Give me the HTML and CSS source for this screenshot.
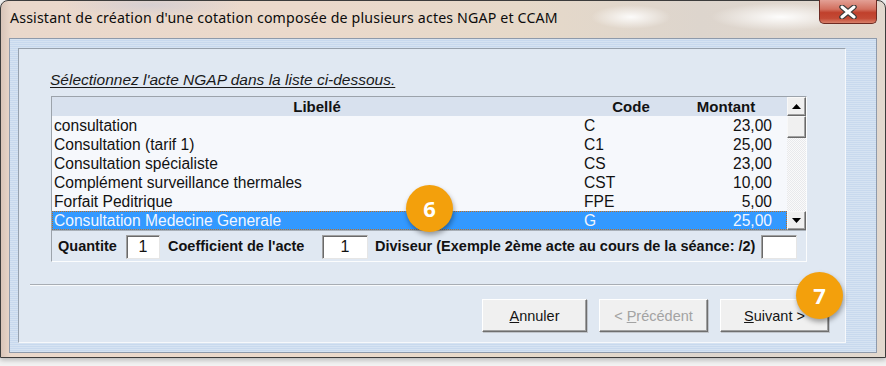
FILE: index.html
```html
<!DOCTYPE html>
<html lang="fr">
<head>
<meta charset="utf-8">
<title>Assistant NGAP CCAM</title>
<link rel="stylesheet" href="styles.css">
</head>
<body>
<div class="window">
  <div class="titlebar">
    <span class="title">Assistant de création d'une cotation composée de plusieurs actes NGAP et CCAM</span>
    <div class="close">
      <svg width="22" height="14" viewBox="0 0 22 14">
        <path d="M5 2 L17 12 M17 2 L5 12" stroke="#3a3a3a" stroke-width="5.5" stroke-linecap="round"/>
        <path d="M5 2 L17 12 M17 2 L5 12" stroke="#ffffff" stroke-width="3" stroke-linecap="round"/>
      </svg>
    </div>
  </div>
  <div class="client">
    <div class="panel">
      <p class="instr">Sélectionnez l'acte NGAP dans la liste ci-dessous.</p>
      <div class="group">
        <div class="list">
          <div class="table">
            <div class="row head"><span class="c-lib">Libellé</span><span class="c-code">Code</span><span class="c-mt">Montant</span></div>
            <div class="row"><span class="c-lib">consultation</span><span class="c-code">C</span><span class="c-mt">23,00</span></div>
            <div class="row"><span class="c-lib">Consultation (tarif 1)</span><span class="c-code">C1</span><span class="c-mt">25,00</span></div>
            <div class="row"><span class="c-lib">Consultation spécialiste</span><span class="c-code">CS</span><span class="c-mt">23,00</span></div>
            <div class="row"><span class="c-lib">Complément surveillance thermales</span><span class="c-code">CST</span><span class="c-mt">10,00</span></div>
            <div class="row"><span class="c-lib">Forfait Peditrique</span><span class="c-code">FPE</span><span class="c-mt">5,00</span></div>
            <div class="row sel"><span class="c-lib">Consultation Medecine Generale</span><span class="c-code">G</span><span class="c-mt">25,00</span></div>
          </div>
          <div class="scrollbar">
            <div class="sb-btn"><svg width="9" height="5" viewBox="0 0 9 5"><path d="M0 5 L4.5 0 L9 5 Z" fill="#000"/></svg></div>
            <div class="sb-thumb"></div>
            <div class="sb-track"></div>
            <div class="sb-btn"><svg width="9" height="5" viewBox="0 0 9 5"><path d="M0 0 L9 0 L4.5 5 Z" fill="#000"/></svg></div>
          </div>
        </div>
        <div class="qty">
          <span class="lbl l-qte">Quantite</span>
          <span class="box b-qte">1</span>
          <span class="lbl l-coef">Coefficient de l'acte</span>
          <span class="box b-coef">1</span>
          <span class="lbl l-div">Diviseur (Exemple 2ème acte au cours de la séance: /2)</span>
          <span class="box b-div"></span>
        </div>
      </div>
      <div class="sep"></div>
      <div class="buttons">
        <button class="btn b-ann"><u>A</u>nnuler</button>
        <button class="btn b-prev dis">&lt; <u>P</u>récédent</button>
        <button class="btn b-next"><u>S</u>uivant &gt;</button>
      </div>
    </div>
  </div>
  <div class="badge badge-6">6</div>
  <div class="badge badge-7">7</div>
</div>
</body>
</html>
```
FILE: styles.css
```css
html, body {
  margin: 0;
  padding: 0;
  background: #f2f2f2;
  width: 886px;
  height: 366px;
  overflow: hidden;
}
.window {
  position: relative;
  box-sizing: border-box;
  width: 886px;
  height: 358px;
  border: 1px solid #3c3c3c;
  border-radius: 8px 8px 0 0;
  padding: 0 8px 5px 8px;
  background:
    radial-gradient(ellipse 40px 12px at 630px 16px, rgba(255,255,255,0.9), rgba(255,255,255,0) 100%),
    radial-gradient(ellipse 70px 14px at 780px 16px, rgba(255,255,255,0.95), rgba(255,255,255,0) 100%),
    radial-gradient(ellipse 90px 12px at 150px 4px, rgba(200,200,215,0.6), rgba(255,255,255,0) 100%),
    linear-gradient(to right, #d8c4b8 0px, #ead8cb 10px, #ebd9cb 300px, #e6d9c9 520px, #ddd5cd 700px, #e2d8ce 886px);
  box-shadow: 0 2px 5px rgba(0,0,0,0.25);
}
.titlebar {
  height: 37px;
  display: flex;
  align-items: flex-start;
  position: relative;
}
.title {
  font-family: "Noto Sans", "Open Sans", sans-serif;
  font-size: 14.2px;
  color: #0c0c0c;
  margin: 7px 0 0 1px;
  letter-spacing: 0.15px;
  white-space: nowrap;
}
.close {
  position: absolute;
  right: 0;
  top: -1px;
  width: 58px;
  height: 24px;
  box-sizing: border-box;
  border: 1px solid #6e2a22;
  border-top: none;
  border-radius: 0 0 5px 5px;
  background: linear-gradient(to bottom, #e3a095 0%, #d2705f 40%, #c0402c 55%, #c44a35 80%, #d8806a 100%);
  display: flex;
  align-items: center;
  justify-content: center;
}
.client {
  box-sizing: border-box;
  height: 315px;
  border: 1px solid #8e9aab;
  padding: 9px 30px 9px 8px;
  background: repeating-linear-gradient(to bottom, #d6e3f2 0px, #d6e3f2 1px, #c8d9ee 1px, #c8d9ee 2px);
}
.panel {
  box-sizing: border-box;
  height: 295px;
  border: 1px solid #97a1ad;
  border-right-color: #f6f8fb;
  border-bottom-color: #f6f8fb;
  background: #e0e8f2;
  position: relative;
}
.instr {
  margin: 0;
  padding: 22px 0 0 31px;
  height: 25px;
  font-family: "Liberation Sans", Arial, sans-serif;
  font-style: italic;
  font-size: 15.5px;
  line-height: 17px;
  color: #1a1a1a;
  text-decoration: underline;
  text-underline-offset: 2px;
  white-space: nowrap;
}
.group {
  margin: 0 0 0 32px;
  width: 756px;
  box-sizing: border-box;
  border: 1px solid #9ca3ab;
  border-right-color: #fbfcfd;
  border-bottom-color: #fbfcfd;
}
.list {
  display: flex;
  height: 133px;
  border-bottom: 1px solid #a9b0b8;
}
.table {
  flex: 1;
  background: #f6f8fc;
  font-family: "Liberation Sans", Arial, sans-serif;
  font-size: 15.6px;
  color: #121212;
}
.row {
  display: grid;
  grid-template-columns: 530px 98px 92px 14px;
  height: 19px;
  line-height: 19px;
  box-sizing: border-box;
  white-space: nowrap;
}
.row.head {
  height: 19px;
  background: #d8e1ee;
  font-weight: bold;
  font-size: 15px;
}
.head .c-lib, .head .c-code, .head .c-mt { text-align: center; padding: 0; }
.c-lib { padding-left: 2px; }
.c-code { padding-left: 2px; }
.c-mt { text-align: right; }
.row.sel {
  background: #3399ff;
  color: #f0f6ff;
  outline: 1px dotted #c07020;
  outline-offset: -1px;
}
.scrollbar {
  width: 19px;
  display: flex;
  flex-direction: column;
  background: #f6f8fc;
}
.sb-btn, .sb-thumb {
  box-sizing: border-box;
  width: 19px;
  height: 19px;
  background: #f0f0f0;
  border: 1px solid #f8f8f8;
  border-right-color: #6a6a6a;
  border-bottom-color: #6a6a6a;
  box-shadow: inset -1px -1px 0 #a0a0a0;
  display: flex;
  align-items: center;
  justify-content: center;
}
.sb-thumb { height: 22px; }
.sb-track {
  flex: 1;
  background-color: #f3f4f6;
  background-image: repeating-conic-gradient(#e8e9ec 0 25%, #fafafa 0 50%);
  background-size: 2px 2px;
}
.qty {
  display: flex;
  align-items: center;
  height: 30px;
  font-family: "Liberation Sans", Arial, sans-serif;
  font-weight: bold;
  font-size: 14.5px;
  color: #121212;
  white-space: nowrap;
}
.lbl { display: block; }
.l-qte { margin-left: 6px; width: 68px; }
.l-coef { margin-left: 8px; width: 154px; }
.l-div { margin-left: 7px; width: 386px; }
.box {
  box-sizing: border-box;
  height: 24px;
  background: #fff;
  border: 1px solid #a0a0a0;
  border-right-color: #e6e6e6;
  border-bottom-color: #e6e6e6;
  box-shadow: inset 1px 1px 0 #6a6a6a;
  font-weight: normal;
  font-size: 16px;
  line-height: 22px;
  text-align: center;
  margin-top: 1px;
}
.b-qte { width: 34px; }
.b-coef { width: 46px; }
.b-div { width: 36px; }
.sep {
  margin: 22px 0 0 11px;
  width: 801px;
  height: 1px;
  background: #a8adb4;
  border-bottom: 1px solid #f8fafc;
}
.buttons {
  display: flex;
  justify-content: flex-end;
  gap: 12px;
  margin: 13px 16px 0 0;
}
.btn {
  box-sizing: border-box;
  height: 33px;
  background: #f0f0f0;
  border: 1px solid #ffffff;
  border-right-color: #6e6e6e;
  border-bottom-color: #6e6e6e;
  box-shadow: inset -1px -1px 0 #a0a0a0, 1px 1px 0 #c0c4ca;
  font-family: "Liberation Sans", Arial, sans-serif;
  font-size: 14.5px;
  color: #141414;
  padding: 0;
  text-align: center;
}
.b-ann { width: 105px; }
.b-prev { width: 109px; }
.b-next { width: 109px; }
.btn.dis { color: #a3a3a3; }
.badge {
  position: absolute;
  width: 47px;
  height: 47px;
  border-radius: 50%;
  background: #f3a00c;
  color: #fff;
  font-family: "Open Sans", "Noto Sans", sans-serif;
  font-weight: bold;
  font-size: 22px;
  line-height: 47px;
  text-align: center;
  box-shadow: 1px 3px 5px rgba(0,0,0,0.35);
}
.badge-6 { left: 405px; top: 184px; }
.badge-7 { left: 795px; top: 271px; }
```
